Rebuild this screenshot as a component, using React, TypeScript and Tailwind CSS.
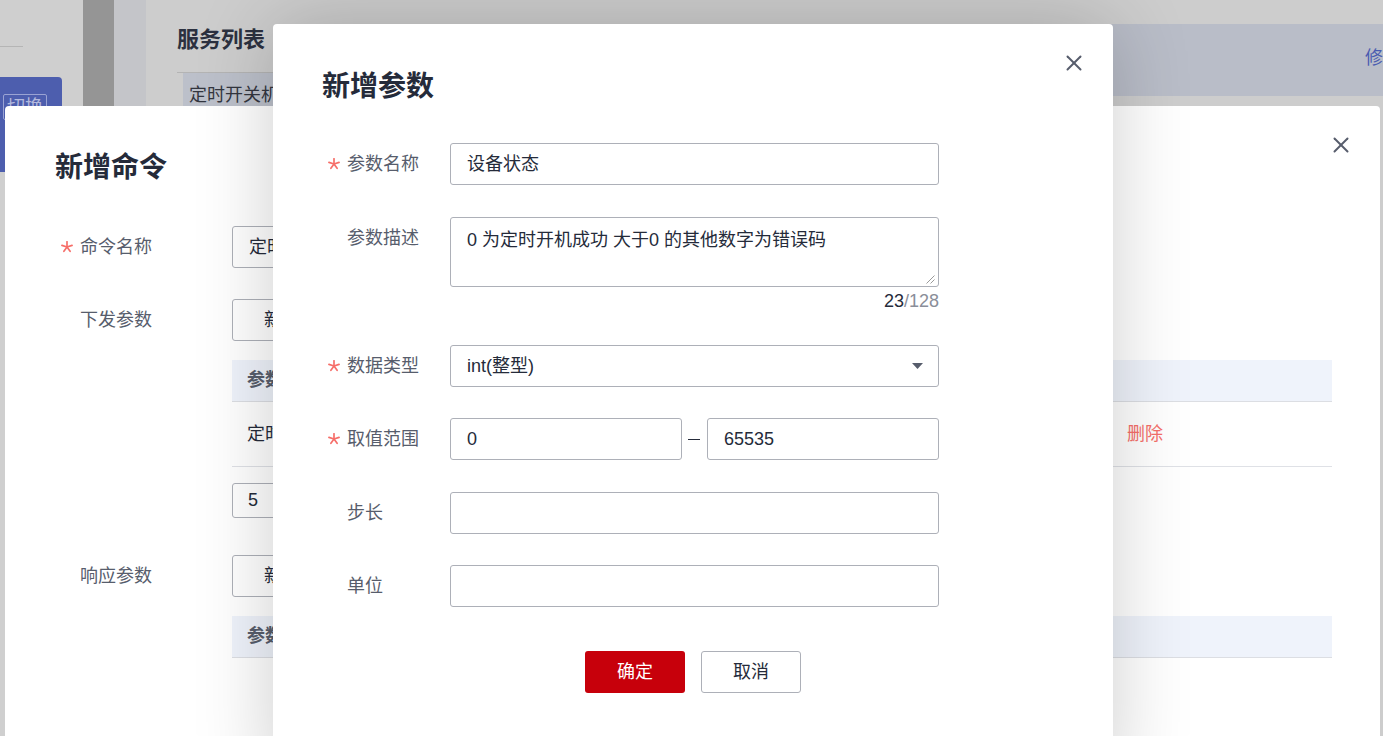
import React from "react";

function Star() {
  const c = 6;
  const r = 5.3;
  const angles = [-90, -18, 54, 126, 198];
  return (
    <svg width="12" height="12" viewBox="0 0 12 12">
      <g stroke="#f66f6a" strokeWidth="1.7" strokeLinecap="round">
        {angles.map((a) => (
          <line
            key={a}
            x1={c}
            y1={c}
            x2={c + r * Math.cos((a * Math.PI) / 180)}
            y2={c + r * Math.sin((a * Math.PI) / 180)}
          />
        ))}
      </g>
    </svg>
  );
}

function CloseX() {
  return (
    <svg width="16" height="16" viewBox="0 0 16 16" className="mt-[31px] shrink-0">
      <g stroke="#575d6c" strokeWidth="2" strokeLinecap="round">
        <line x1="1.5" y1="1.5" x2="14.5" y2="14.5" />
        <line x1="14.5" y1="1.5" x2="1.5" y2="14.5" />
      </g>
    </svg>
  );
}

function Label({ text, required, w }: { text: string; required?: boolean; w: string }) {
  return (
    <div className={`flex h-[42px] shrink-0 items-center text-[18px] text-[#575d6c] ${w}`}>
      <span className="flex w-[25px] items-center pl-[6px]">{required ? <Star /> : null}</span>
      <span>{text}</span>
    </div>
  );
}

function Box({ children, w = "w-[489px]" }: { children?: React.ReactNode; w?: string }) {
  return (
    <div
      className={`flex h-[42px] items-center rounded-[3px] border border-[#adb0b8] bg-white pl-[16px] text-[18px] text-[#252b3a] ${w}`}
    >
      {children}
    </div>
  );
}

function Background() {
  return (
    <div className="absolute inset-0 flex bg-[#cdcdcd]">
      <div className="flex w-[83px] shrink-0 flex-col bg-[#cfcfcf]">
        <div className="mt-[46px] h-px w-[23px] bg-[#b5b5b5]" />
        <div className="mt-[30px] h-[95px] w-[62px] rounded-r-[4px] bg-[#4d5eae] pl-[3px] pt-[17px]">
          <div className="h-[26px] w-[44px] rounded-[2px] border border-[#9aa3d3] text-center text-[18px] leading-[24px] text-[#b3b9dd]">
            切换
          </div>
        </div>
      </div>
      <div className="w-[31px] shrink-0 bg-[#959595]" />
      <div className="w-[32px] shrink-0 bg-[#c4c5c9]" />
      <div className="flex flex-1">
        <div className="w-[737px] shrink-0 pl-[31px]">
          <div className="pt-[26px] text-[22px] font-bold leading-[28px] text-[#2c3140]">服务列表</div>
          <div className="mt-[18px] h-px bg-[#b4b4b4]" />
          <div className="ml-[6px] h-[44px] bg-[#bcc0ca] pl-[6px] text-[18px] leading-[44px] text-[#33363f]">
            定时开关机
          </div>
        </div>
        <div className="flex-1 pt-[24px]">
          <div className="h-[72px] overflow-hidden whitespace-nowrap bg-[#b9bdc8] pl-[482px] text-[18px] leading-[68px] text-[#4a5cb0]">
            修
          </div>
        </div>
      </div>
    </div>
  );
}

function CommandDialog() {
  return (
    <div className="absolute left-[5px] top-[106px] h-[700px] w-[1375px] rounded-[4px] bg-white">
      <div className="flex items-start justify-between pl-[50px] pr-[31px]">
        <div className="pt-[43px] text-[28px] font-bold leading-[38px] text-[#252b3a]">新增命令</div>
        <CloseX />
      </div>
      <div className="mt-[39px] flex flex-col pl-[50px]">
        <div className="flex">
          <Label text="命令名称" required w="w-[177px]" />
          <Box>定时开关机</Box>
        </div>
        <div className="mt-[31px] flex">
          <Label text="下发参数" w="w-[177px]" />
          <div className="flex flex-col">
            <div className="flex h-[42px] w-[100px] items-center justify-center rounded-[3px] border border-[#adb0b8] text-[18px] text-[#252b3a]">
              新增
            </div>
            <div className="mt-[19px] w-[1100px]">
              <div className="flex h-[42px] items-center border-b border-[#dcdee3] bg-[#eff3fb] pl-[15px] text-[18px] font-bold text-[#575d6c]">
                参数名称
              </div>
              <div className="flex h-[65px] items-center border-b border-[#dfe1e6] text-[18px] text-[#252b3a]">
                <div className="w-[895px] pl-[15px]">定时开关机</div>
                <div className="text-[#f66f6a]">删除</div>
              </div>
            </div>
            <div className="mt-[16px] flex h-[35px] w-[90px] items-center rounded-[3px] border border-[#adb0b8] pl-[15px] text-[18px] text-[#252b3a]">
              5
            </div>
          </div>
        </div>
        <div className="mt-[37px] flex">
          <Label text="响应参数" w="w-[177px]" />
          <div className="flex flex-col">
            <div className="flex h-[42px] w-[100px] items-center justify-center rounded-[3px] border border-[#adb0b8] text-[18px] text-[#252b3a]">
              新增
            </div>
            <div className="mt-[19px] w-[1100px]">
              <div className="flex h-[42px] items-center border-b border-[#dcdee3] bg-[#eff3fb] pl-[15px] text-[18px] font-bold text-[#575d6c]">
                参数名称
              </div>
            </div>
          </div>
        </div>
      </div>
    </div>
  );
}

function ParamDialog() {
  return (
    <div className="absolute left-[273px] top-[24px] h-[760px] w-[840px] rounded-[4px] bg-white shadow-[0_0_80px_rgba(0,0,0,0.2)]">
      <div className="flex items-start justify-between pl-[49px] pr-[31px]">
        <div className="pt-[44px] text-[28px] font-bold leading-[38px] text-[#252b3a]">新增参数</div>
        <CloseX />
      </div>
      <div className="mt-[37px] flex flex-col pl-[49px]">
        <div className="flex">
          <Label text="参数名称" required w="w-[128px]" />
          <Box>设备状态</Box>
        </div>
        <div className="mt-[32px] flex">
          <Label text="参数描述" w="w-[128px]" />
          <div className="flex w-[489px] flex-col">
            <div className="relative h-[70px] rounded-[3px] border border-[#adb0b8] pl-[16px] pt-[10px] text-[18px] leading-[24px] text-[#252b3a]">
              0 为定时开机成功 大于0 的其他数字为错误码
              <svg width="9" height="9" viewBox="0 0 9 9" className="absolute bottom-[2px] right-[3px]">
                <g stroke="#9a9a9a" strokeWidth="1">
                  <line x1="8.5" y1="0.5" x2="0.5" y2="8.5" />
                  <line x1="8.5" y1="4.5" x2="4.5" y2="8.5" />
                </g>
              </svg>
            </div>
            <div className="mt-[2px] h-[24px] text-right text-[18px] leading-[24px]">
              <span className="text-[#252b3a]">23</span>
              <span className="text-[#8a8e99]">/128</span>
            </div>
          </div>
        </div>
        <div className="mt-[32px] flex">
          <Label text="数据类型" required w="w-[128px]" />
          <div className="flex h-[42px] w-[489px] items-center justify-between rounded-[3px] border border-[#adb0b8] pl-[16px] pr-[15px] text-[18px] text-[#252b3a]">
            <span>int(整型)</span>
            <svg width="11" height="6" viewBox="0 0 11 6">
              <polygon points="0,0 11,0 5.5,6" fill="#575d6c" />
            </svg>
          </div>
        </div>
        <div className="mt-[31px] flex">
          <Label text="取值范围" required w="w-[128px]" />
          <div className="flex w-[489px] items-center">
            <Box w="w-[232px]">0</Box>
            <div className="flex w-[25px] justify-center pr-[1px]">
              <div className="h-px w-[12px] bg-[#252b3a]" />
            </div>
            <Box w="w-[232px]">65535</Box>
          </div>
        </div>
        <div className="mt-[32px] flex">
          <Label text="步长" w="w-[128px]" />
          <Box />
        </div>
        <div className="mt-[31px] flex">
          <Label text="单位" w="w-[128px]" />
          <Box />
        </div>
      </div>
      <div className="mt-[44px] flex justify-center gap-[16px]">
        <div className="flex h-[42px] w-[100px] items-center justify-center rounded-[3px] bg-[#c7000b] text-[18px] text-white">
          确定
        </div>
        <div className="flex h-[42px] w-[100px] items-center justify-center rounded-[3px] border border-[#adb0b8] bg-white text-[18px] text-[#252b3a]">
          取消
        </div>
      </div>
    </div>
  );
}

export default function App() {
  return (
    <div className="relative h-[736px] w-[1383px] overflow-hidden font-['Liberation_Sans','Noto_Sans_CJK_SC',sans-serif]">
      <Background />
      <CommandDialog />
      <ParamDialog />
    </div>
  );
}
